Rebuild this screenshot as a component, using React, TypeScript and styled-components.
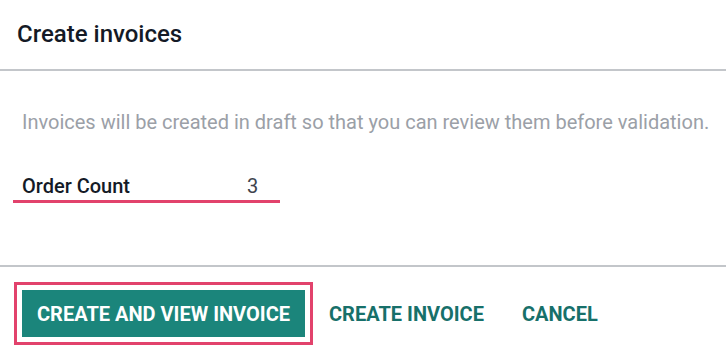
import React from "react";
import styled, { createGlobalStyle } from "styled-components";

const GlobalStyle = createGlobalStyle`
  html, body {
    margin: 0;
    padding: 0;
    background: #ffffff;
    font-family: Roboto, "Liberation Sans", sans-serif;
  }
`;

const Dialog = styled.div`
  width: 726px;
  height: 362px;
  display: flex;
  flex-direction: column;
  background: #ffffff;
  overflow: hidden;
`;

const Header = styled.header`
  height: 71px;
  padding: 0 0 2px 17px;
  display: flex;
  align-items: center;
  border-bottom: 2px solid #c3c6ca;
  box-sizing: border-box;
`;

const Title = styled.h4`
  margin: 0;
  font-size: 24px;
  font-weight: 500;
  color: #141a26;
`;

const Body = styled.main`
  height: 196px;
  padding-top: 39px;
  box-sizing: border-box;
  border-bottom: 2px solid #c3c6ca;
`;

const Note = styled.p`
  margin: 0 0 0 22px;
  font-size: 20px;
  line-height: 24px;
  color: #9ba0a7;
  white-space: nowrap;
`;

const Field = styled.div`
  margin: 40px 0 0 13px;
  width: 267px;
  height: 29px;
  padding-left: 9px;
  box-sizing: border-box;
  display: flex;
  align-items: baseline;
  border-bottom: 3px solid #e2426c;
  line-height: 24px;
`;

const FieldLabel = styled.span`
  width: 225px;
  font-size: 20px;
  font-weight: 500;
  color: #141a26;
`;

const FieldValue = styled.span`
  font-size: 20px;
  color: #3e444d;
`;

const Footer = styled.footer`
  display: flex;
  align-items: center;
  padding: 23px 0 0 22px;
`;

const Button = styled.button<{ $primary?: boolean }>`
  height: 47px;
  border: none;
  margin: 0;
  cursor: pointer;
  font-family: Roboto, "Liberation Sans", sans-serif;
  font-size: 20px;
  font-weight: 700;
  text-transform: uppercase;
  padding: 0 ${(p) => (p.$primary ? "15px" : "19px")};
  color: ${(p) => (p.$primary ? "#ffffff" : "#17706a")};
  background: ${(p) => (p.$primary ? "#1b857b" : "transparent")};
  outline: ${(p) => (p.$primary ? "3px solid #e2426c" : "none")};
  outline-offset: 5px;
  margin-right: ${(p) => (p.$primary ? "5px" : "0")};
`;

export default function App() {
  return (
    <Dialog>
      <GlobalStyle />
      <Header>
        <Title>Create invoices</Title>
      </Header>
      <Body>
        <Note>
          Invoices will be created in draft so that you can review them before
          validation.
        </Note>
        <Field>
          <FieldLabel>Order Count</FieldLabel>
          <FieldValue>3</FieldValue>
        </Field>
      </Body>
      <Footer>
        <Button $primary>Create and view invoice</Button>
        <Button>Create invoice</Button>
        <Button>Cancel</Button>
      </Footer>
    </Dialog>
  );
}
